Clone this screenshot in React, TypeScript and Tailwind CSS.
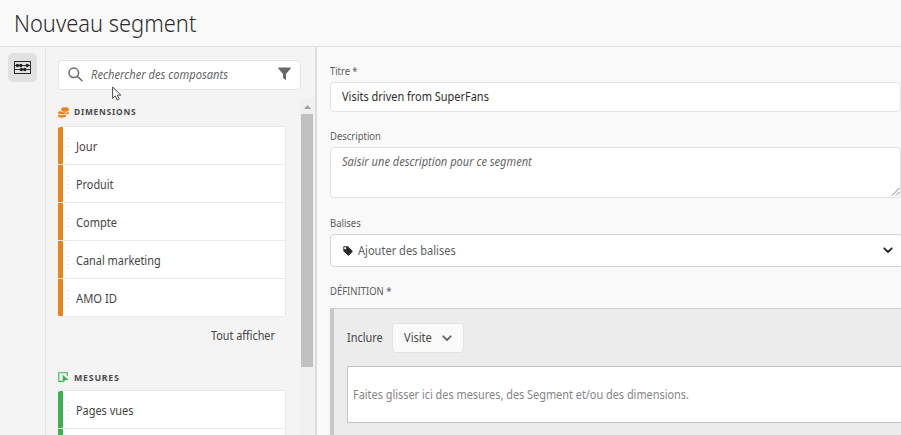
import type { ReactNode } from "react";

function Grip() {
  return (
    <svg width="2" height="17" className="ml-[5px] shrink-0" fill="#cfcfcf">
      {[0, 4, 8, 12, 16].map((y) => (
        <rect key={y} x="0" y={y} width="1" height="1" />
      ))}
    </svg>
  );
}

function Row({ label, bar, width }: { label: string; bar: string; width: string }) {
  return (
    <div className="flex h-[38px] items-stretch border-b border-[#e9e9e9] bg-white">
      <div className={`w-[5px] shrink-0 ${bar}`} />
      <div className="flex items-center pt-[2px]">
        <Grip />
        <span className={`ml-[6px] block origin-left text-[13px] whitespace-nowrap text-[#444] ${width}`}>{label}</span>
      </div>
    </div>
  );
}

function SectionTitle({ icon, width, children }: { icon: ReactNode; width: string; children: ReactNode }) {
  return (
    <div className="flex h-3 items-center">
      {icon}
      <h2 className={`ml-[5px] origin-left text-[9.5px] leading-3 font-bold tracking-[0.8px] text-[#4b4b4b] ${width}`}>{children}</h2>
    </div>
  );
}

function Chevron({ color }: { color: string }) {
  return (
    <svg width="10" height="7" viewBox="0 0 10 7" fill="none" stroke={color} strokeWidth="1.8" strokeLinecap="round" strokeLinejoin="round">
      <path d="M1.3 1.3 5 5l3.7-3.7" />
    </svg>
  );
}

function Rail() {
  return (
    <nav className="flex w-[46px] shrink-0 justify-center border-r border-[#e4e4e4] bg-[#f4f4f4] pt-[6px]">
      <button className="flex h-[29px] w-[29px] items-center justify-center rounded-[5px] bg-[#e1e1e1]">
        <svg width="17" height="13" viewBox="0 0 17 13" fill="none" stroke="#292929">
          <path d="M.5 0v13M16.5 0v13M0 .5h17M0 12.5h17" />
          <path d="M1 4.5h15M1 8.5h15" strokeWidth=".9" />
          <g fill="#222" stroke="none">
            <circle cx="3.4" cy="4.5" r="1.7" />
            <circle cx="6.8" cy="4.5" r="1.7" />
            <circle cx="13.3" cy="4.5" r="1.7" />
            <circle cx="7.4" cy="8.5" r="1.7" />
            <circle cx="10.8" cy="8.5" r="1.7" />
          </g>
        </svg>
      </button>
    </nav>
  );
}

function Sidebar() {
  return (
    <aside className="relative flex w-[271px] shrink-0 flex-col overflow-hidden border-r-2 border-[#dcdcdc] bg-[#f4f4f4] pl-3">
      <div className="mt-[13px] flex h-[30px] w-[243px] shrink-0 items-center rounded-[4px] border border-[#e5e5e5] bg-white">
        <svg width="15" height="15" viewBox="0 0 15 15" className="-mt-px ml-[9px] shrink-0" fill="none" stroke="#666" strokeWidth="1.5" strokeLinecap="round">
          <circle cx="5.8" cy="5.8" r="4.8" />
          <path d="m9.5 9.5 4.5 4.2" />
        </svg>
        <span className="ml-[8px] w-[187px] origin-left scale-x-[0.856] text-[13px] whitespace-nowrap text-[#666] italic">
          Rechercher des composants
        </span>
        <svg width="13" height="14" viewBox="0 0 13 14" className="-mt-[2px] shrink-0" fill="#686868">
          <path d="M.3.5h12.4v1L8 7v6.2L5 11V7L.3 1.5Z" />
        </svg>
      </div>
      <div className="mt-2 flex min-h-0 flex-1">
        <div className="w-[228px] shrink-0 pt-2">
          <SectionTitle
            width="scale-x-[0.89]"
            icon={
              <svg width="11" height="11" viewBox="0 0 11 11" fill="#e68619">
                <path d="M3.3 1.4C4-.1 10.400-.1 10.700 1.400v2.400c-.6 1.300-6.800 1.300-7.400 0Z" />
                <path d="M.1 5.100c.2-.8 1.700-1 2.700-.8.8.9 3 1.100 5 .9v1.100C7.300 7.700.4 7.700.1 6.200Z" />
                <path d="M8.500 5.200c1-.1 1.700-.4 2.200-.8v2c-.4.700-1.300 1-2.200 1.200Z" />
                <path d="M.1 7.500c1.700 1 6.100 1 7.900 0v2c-1.600 1.500-7.500 1.500-7.900 0Z" />
              </svg>
            }
          >
            DIMENSIONS
          </SectionTitle>
          <div className="mt-[8px] overflow-hidden rounded-[3px] border-t border-r border-[#e9e9e9]">
            <Row label="Jour" bar="bg-[#e68619]" width="scale-x-[0.86]" />
            <Row label="Produit" bar="bg-[#e68619]" width="scale-x-[0.835]" />
            <Row label="Compte" bar="bg-[#e68619]" width="scale-x-[0.85]" />
            <Row label="Canal marketing" bar="bg-[#e68619]" width="scale-x-[0.84]" />
            <Row label="AMO ID" bar="bg-[#e68619]" width="scale-x-[0.86]" />
          </div>
          <div className="mt-[9px] flex h-5 items-center justify-end pr-[11px]">
            <span className="origin-right scale-x-[0.83] text-[13px] text-[#444]">Tout afficher</span>
          </div>
          <div className="mt-[26px]">
            <SectionTitle
              width="scale-x-[0.93]"
              icon={
                <svg width="11" height="11" viewBox="0 0 11 11" className="-mt-px">
                  <path d="M4.500 9.400H.8V.8h8.400v3.400" fill="none" stroke="#3bb24b" strokeWidth="1.100" />
                  <path d="m4.700 2.800 5.800 5.100H7.600l-2.900 2.800Z" fill="#3bb24b" />
                </svg>
              }
            >
              MESURES
            </SectionTitle>
          </div>
          <div className="mt-[6px] overflow-hidden rounded-[3px] border-t border-r border-[#e9e9e9]">
            <Row label="Pages vues" bar="bg-[#3bb24b]" width="scale-x-[0.84]" />
            <Row label="" bar="bg-[#3bb24b]" width="" />
          </div>
        </div>
        <div className="ml-[14px] flex w-[14px] flex-col items-center bg-[#f0f0f0]">
          <svg width="7" height="4" viewBox="0 0 7 4" className="mt-[7px] mb-[5px] shrink-0" fill="#a0a0a0">
            <path d="M3.500 0 7 4H0Z" />
          </svg>
          <div className="h-[253px] w-[12px] shrink-0 bg-[#c1c1c1]" />
        </div>
      </div>
      <svg width="10" height="15" viewBox="0 0 10 15" className="absolute top-[39px] left-[66px]" fill="#fff" stroke="#4b4b59" strokeWidth="1">
        <path d="M.6.900v11.400l2.600-2.500 2 4.200 2-.900-1.900-4h3.500Z" />
      </svg>
    </aside>
  );
}

function FieldLabel({ children, className }: { children: ReactNode; className: string }) {
  return <div className={`origin-left text-[11px] leading-[14px] whitespace-nowrap text-[#5c5c5c] ${className}`}>{children}</div>;
}

function SegmentForm() {
  return (
    <main className="flex min-w-0 flex-1 flex-col overflow-hidden bg-[#f9f9f9] pl-[13px]">
      <FieldLabel className="mt-[17px] scale-x-[0.85]">Titre *</FieldLabel>
      <div className="mt-[4px] flex h-[30px] w-[571px] shrink-0 items-center rounded-[4px] border border-[#e3e3e3] bg-white pl-[11px]">
        <span className="origin-left scale-x-[0.843] text-[13px] whitespace-nowrap text-[#2c2c2c]">Visits driven from SuperFans</span>
      </div>
      <FieldLabel className="mt-[17px] scale-x-[0.86]">Description</FieldLabel>
      <div className="mt-[4px] flex h-[51px] w-[571px] shrink-0 justify-between rounded-[4px] border border-[#e1e1e1] bg-white pl-[11px]">
        <span className="mt-1 origin-left scale-x-[0.85] text-[13px] leading-[18px] whitespace-nowrap text-[#666] italic">
          Saisir une description pour ce segment
        </span>
        <svg width="9" height="9" viewBox="0 0 9 9" className="mb-px self-end" stroke="#777" strokeWidth=".9">
          <path d="m1 8.500 7.500-7.500M5 8.500l3.500-3.500" />
        </svg>
      </div>
      <FieldLabel className="mt-[18px] scale-x-[0.86]">Balises</FieldLabel>
      <div className="mt-[4px] flex h-[33px] w-[573px] shrink-0 items-center rounded-[4px] border border-[#d3d3d3] bg-white pl-[12px]">
        <svg width="10" height="10" viewBox="0 0 10 10" fill="#292929">
          <path fillRule="evenodd" d="M.3.900Q.3.300.9.300h4L9.600 5q.4.400 0 .8L6 9.500q-.5.400-1 0L.3 4.900Zm1.900.2a1.050 1.050 0 1 0 0 2.100 1.050 1.050 0 0 0 0-2.100Z" />
        </svg>
        <span className="ml-[5px] w-[525px] origin-left scale-x-[0.85] text-[13px] text-[#5e5e5e]">Ajouter des balises</span>
        <Chevron color="#222" />
      </div>
      <FieldLabel className="mt-[17px] scale-x-[0.86]">DÉFINITION *</FieldLabel>
      <section className="mt-[10px] flex-1 border-t border-l-[4px] border-t-[#d0d0d0] border-l-[#c8c8c8] bg-[#ececec] pt-[14px] pl-[13px]">
        <div className="flex items-center">
          <span className="w-[45px] origin-left scale-x-[0.84] text-[13px] text-[#444]">Inclure</span>
          <button className="flex h-[30px] w-[72px] items-center rounded-[4px] border border-[#e2e2e2] bg-[#fafafa] pl-[11px]">
            <span className="w-[38px] origin-left scale-x-[0.85] text-left text-[13px] text-[#444]">Visite</span>
            <Chevron color="#666" />
          </button>
        </div>
        <div className="mt-[13px] flex h-[57px] w-[600px] items-center border border-[#c4c4c4] bg-white pl-[5px]">
          <span className="origin-left scale-x-[0.838] text-[13px] whitespace-nowrap text-[#858585]">
            Faites glisser ici des mesures, des Segment et/ou des dimensions.
          </span>
        </div>
      </section>
    </main>
  );
}

export default function App() {
  return (
    <div className="flex h-[435px] w-[901px] flex-col overflow-hidden bg-[#f9f9f9] font-['Noto_Sans','Open_Sans',sans-serif]">
      <header className="flex h-[47px] shrink-0 items-center border-b border-[#e1e1e1] pl-[14px]">
        <h1 className="origin-left scale-x-[0.912] text-[24px] font-light whitespace-nowrap text-[#2c2c2c]">Nouveau segment</h1>
      </header>
      <div className="flex min-h-0 flex-1">
        <Rail />
        <Sidebar />
        <SegmentForm />
      </div>
    </div>
  );
}
